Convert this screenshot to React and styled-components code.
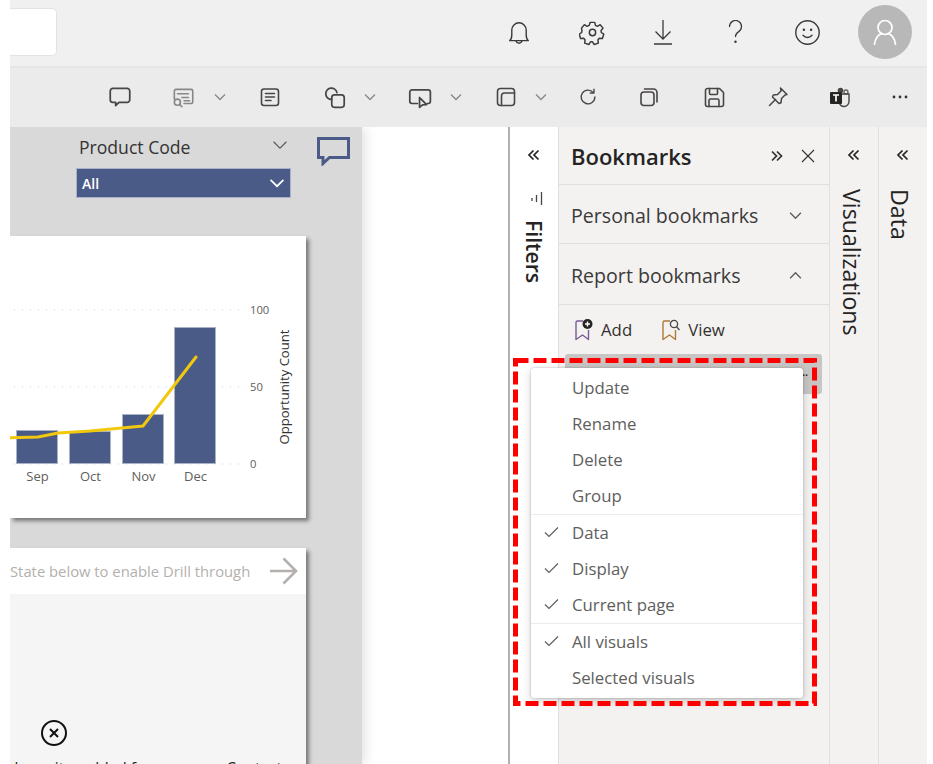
import React from "react";
import styled, { createGlobalStyle } from "styled-components";

const Global = createGlobalStyle`
  html, body { margin: 0; padding: 0; background: #fff; overflow: hidden; }
  * { box-sizing: border-box; }
  body { font-family: "Open Sans", "Noto Sans", sans-serif; }
`;

const Shell = styled.div`
  margin-left: 10px;
  width: 917px;
  height: 764px;
  overflow: hidden;
  display: flex;
  flex-direction: column;
`;

const TopBar = styled.header`
  height: 68px;
  flex: none;
  background: #f0f0f0;
  border-bottom: 2px solid #e6e6e6;
  display: flex;
  align-items: flex-start;
  justify-content: space-between;
  padding-right: 15px;
`;

const SearchBox = styled.div`
  width: 47px;
  height: 48px;
  margin-top: 8px;
  background: #fff;
  border: 1px solid #e2e2e2;
  border-left: 0;
  border-radius: 0 5px 5px 0;
`;

const TopActions = styled.div`
  display: flex;
  align-items: center;
  height: 64px;
`;

const TopIcon = styled.span`
  width: 32px;
  height: 32px;
  margin-left: ${(p) => p.$gap ?? 40}px;
  display: flex;
  align-items: center;
  justify-content: center;
  color: #3b3a39;
  svg { display: block; }
`;

const GearNudge = styled.span`
  display: block;
  margin-left: 2px;
`;

const Avatar = styled.div`
  width: 54px;
  height: 54px;
  margin-left: 35px;
  border-radius: 50%;
  background: #b8b8b8;
  display: flex;
  align-items: center;
  justify-content: center;
`;

const Toolbar = styled.div`
  height: 59px;
  flex: none;
  background: #ebebeb;
  display: flex;
  align-items: center;
  padding-left: 96px;
  padding-bottom: 1px;
`;

const ToolIcon = styled.span`
  width: 28px;
  height: 28px;
  flex: none;
  margin-left: ${(p) => p.$gap ?? 0}px;
  display: flex;
  align-items: center;
  justify-content: center;
  color: ${(p) => (p.$muted ? "#8a8886" : "#484644")};
  svg { display: block; }
`;

const Main = styled.main`
  flex: 1;
  min-height: 0;
  display: flex;
  position: relative;
`;

const Canvas = styled.section`
  width: 352px;
  flex: none;
  background: #d9d9d9;
  position: relative;
  z-index: 1;
  box-shadow: 2px 0 12px rgba(0, 0, 0, 0.14);
  clip-path: inset(0 -24px 0 0);
  display: flex;
  flex-direction: column;
  overflow: hidden;
`;

const CanvasHead = styled.div`
  height: 109px;
  flex: none;
  display: flex;
  padding: 10px 0 0 66px;
`;

const Slicer = styled.div`
  width: 215px;
`;

const SlicerTitle = styled.div`
  display: flex;
  align-items: center;
  justify-content: space-between;
  height: 21px;
  padding: 0 2px 0 3px;
  font-size: 17.6px;
  color: #333;
  line-height: 21px;
  svg { margin-top: -6px; }
`;

const SlicerSelect = styled.div`
  margin-top: 10px;
  height: 30px;
  background: #4a5b87;
  border: 1px solid #a9b2cc;
  color: #fff;
  font-size: 14px;
  font-weight: 600;
  display: flex;
  align-items: center;
  justify-content: space-between;
  padding: 0 4px 0 5px;
`;

const CommentMark = styled.div`
  margin-left: 26px;
  width: 33px;
  height: 30px;
  svg { display: block; }
`;

const Cards = styled.div`
  display: flex;
  flex-direction: column;
  gap: 30px;
  width: 296px;
`;

const Card = styled.article`
  background: #fff;
  box-shadow: 3px 3px 4px rgba(0, 0, 0, 0.45);
  height: ${(p) => p.$h}px;
  flex: none;
  svg { display: block; }
`;

const DrillHeader = styled.div`
  height: 46px;
  display: flex;
  align-items: center;
  justify-content: space-between;
  padding-right: 8px;
  font-size: 14.8px;
  color: #b3b0ad;
  white-space: nowrap;
`;

const DrillBody = styled.div`
  height: 178px;
  background: #f5f5f5;
  padding: 126px 0 0 31px;
  overflow: hidden;
`;

const DrillNote = styled.div`
  margin: 12px 0 0 -31px;
  width: 272px;
  text-align: right;
  font-size: 15.5px;
  line-height: 20px;
  color: #252423;
  white-space: nowrap;
`;

const BlankArea = styled.div`
  flex: 1;
  background: #fff;
`;

const SidePane = styled.aside`
  width: ${(p) => p.$w}px;
  flex: none;
  background: ${(p) => p.$bg || "#f3f2f1"};
  border-left: ${(p) => p.$edge || "1.5px solid #e1dfdd"};
  display: flex;
  flex-direction: column;
  align-items: center;
  padding-top: 21px;
  color: #252423;
  svg { display: block; }
`;

const VerticalLabel = styled.div`
  writing-mode: vertical-rl;
  font-size: ${(p) => p.$size || 23.2}px;
  font-weight: ${(p) => p.$weight || 500};
  line-height: 26px;
  margin-top: ${(p) => p.$top}px;
  margin-left: ${(p) => p.$left || 0}px;
  color: #252423;
`;

const FunnelMark = styled.div`
  margin: 30px 0 0 6px;
  height: 14px;
`;

const BookmarksPane = styled.section`
  width: 271px;
  flex: none;
  background: #f3f2f1;
  border-left: 1.5px solid #e1dfdd;
  display: flex;
  flex-direction: column;
  color: #323130;
  svg { display: block; }
`;

const PaneHead = styled.div`
  height: 58px;
  flex: none;
  border-bottom: 1.5px solid #e1dfdd;
  display: flex;
  align-items: center;
  padding: 0 14px 0 12px;
`;

const PaneTitle = styled.h2`
  margin: 0;
  flex: 1;
  font-size: 22px;
  font-weight: 600;
  color: #252423;
`;

const PaneAction = styled.span`
  margin-left: ${(p) => p.$gap || 0}px;
  color: #323130;
`;

const Section = styled.div`
  height: ${(p) => p.$h}px;
  flex: none;
  border-bottom: 1.5px solid #e1dfdd;
  display: flex;
  align-items: center;
  justify-content: space-between;
  padding: 2px 26px 0 12px;
  font-size: 19.6px;
  color: #3b3a39;
`;

const ActionRow = styled.div`
  height: 49px;
  flex: none;
  display: flex;
  align-items: center;
  padding-left: 15px;
  font-size: 16.8px;
  color: #323130;
`;

const ActionButton = styled.span`
  display: flex;
  align-items: center;
  gap: 7px;
  margin-left: ${(p) => p.$gap || 0}px;
`;

const BookmarkRow = styled.div`
  margin: 0 7px 0 6px;
  height: 40px;
  background: #c8c6c4;
  border-radius: 3px;
  display: flex;
  justify-content: flex-end;
  padding: 17px 14px 0 0;
  font-size: 8px;
  line-height: 1;
  color: #323130;
`;

const Menu = styled.div`
  position: absolute;
  left: 521px;
  top: 241px;
  width: 272px;
  height: 330px;
  padding: 2px 0;
  background: #fff;
  border-radius: 3px;
  box-shadow: 0 0 2px rgba(0, 0, 0, 0.3), 0 3px 10px rgba(0, 0, 0, 0.18);
  z-index: 3;
`;

const MenuGroup = styled.div`
  & + & { border-top: 1.5px solid #edebe9; }
`;

const MenuItem = styled.div`
  height: 36px;
  padding-bottom: 2px;
  display: flex;
  align-items: center;
  font-size: 16.8px;
  color: #605e5c;
`;

const CheckSlot = styled.span`
  width: 41px;
  flex: none;
  display: flex;
  justify-content: center;
  color: #605e5c;
`;

const Callout = styled.svg`
  position: absolute;
  left: 503px;
  top: 231px;
  z-index: 4;
  pointer-events: none;
`;

const I = ({ children, s = 24, sw = 1.6, vb = 24 }) => (
  <svg width={s} height={s} viewBox={`0 0 ${vb} ${vb}`} fill="none" stroke="currentColor" strokeWidth={sw} strokeLinecap="round" strokeLinejoin="round">
    {children}
  </svg>
);

const Chevron = ({ up, s = 14, color = "#8a8886", sw = 1.3 }) => (
  <svg width={s} height={s} viewBox="0 0 14 14" fill="none" stroke={color} strokeWidth={sw}>
    <polyline points={up ? "2,9.5 7,4.5 12,9.5" : "2,4.5 7,9.5 12,4.5"} />
  </svg>
);

const Double = ({ right }) => (
  <svg width="14" height="14" viewBox="0 0 14 14" fill="none" stroke="currentColor" strokeWidth="1.7">
    {right ? (
      <>
        <polyline points="2,2.5 6.5,7 2,11.5" />
        <polyline points="7,2.5 11.5,7 7,11.5" />
      </>
    ) : (
      <>
        <polyline points="6.5,2.5 2,7 6.5,11.5" />
        <polyline points="11.5,2.5 7,7 11.5,11.5" />
      </>
    )}
  </svg>
);

const Check = () => (
  <svg width="15" height="12" viewBox="0 0 15 12" fill="none" stroke="currentColor" strokeWidth="1.2">
    <polyline points="1,6.5 5,10.5 14,1.5" />
  </svg>
);

const BookmarkIcon = ({ color, kind }) => (
  <svg width="20" height="24" viewBox="0 0 20 24" fill="none">
    <path d="M2 4.5 a1.5 1.5 0 0 1 1.5-1.5 H9 M14.5 12 V21.5 L8.5 17 L2 21.5 V4.5" stroke={color} strokeWidth="1.4" strokeLinejoin="round" />
    {kind === "add" ? (
      <>
        <circle cx="13.5" cy="6" r="5" fill="#252423" />
        <path d="M13.5 3.5v5M11 6h5" stroke="#fff" strokeWidth="1.4" />
      </>
    ) : (
      <>
        <circle cx="13" cy="6" r="3.6" stroke="#484644" strokeWidth="1.3" />
        <path d="M15.6 8.8 L18.5 12" stroke="#484644" strokeWidth="1.3" />
      </>
    )}
  </svg>
);

const months = [
  { m: "Sep", x: 16, top: 430 },
  { m: "Oct", x: 69, top: 431 },
  { m: "Nov", x: 122, top: 414 },
  { m: "Dec", x: 174, top: 327 },
];

const BarChart = () => (
  <svg width="296" height="282" viewBox="10 236 296 282">
    {[310, 387, 464].map((y) => (
      <line key={y} x1="14" x2="240" y1={y} y2={y} stroke="#cfcfcf" strokeWidth="1" strokeDasharray="1 7" />
    ))}
    {months.map((b) => (
      <g key={b.m}>
        <rect x={b.x + 0.5} y={b.top + 0.5} width="41" height={463 - b.top} fill="#4a5b87" stroke="#aab2c8" strokeWidth="1" />
        <text x={b.x + 21.5} y="480.5" textAnchor="middle" fontSize="13" fill="#605e5c" fontFamily="Open Sans, sans-serif">{b.m}</text>
      </g>
    ))}
    <polyline points="0,438 38,437 58,433 90,431 143,426 196,357" fill="none" stroke="#f2c80f" strokeWidth="3" strokeLinecap="round" strokeLinejoin="round" />
    {[["100", 313.5], ["50", 390.5], ["0", 467.5]].map(([t, y]) => (
      <text key={t} x="250" y={y} fontSize="11.2" fill="#605e5c" fontFamily="Open Sans, sans-serif">{t}</text>
    ))}
    <text transform="translate(288.5 387) rotate(-90)" textAnchor="middle" fontSize="13.1" fill="#333" fontFamily="Open Sans, sans-serif">Opportunity Count</text>
  </svg>
);

const tools = [
  { gap: 0, el: <I s={26}><path d="M5.5 4h13A2.5 2.5 0 0 1 21 6.5v8a2.5 2.5 0 0 1-2.5 2.5H11l-3 3v-3H5.5A2.5 2.5 0 0 1 3 14.5v-8A2.5 2.5 0 0 1 5.5 4Z" /></I> },
  { gap: 35, muted: true, el: <I s={26} sw={1.5}><path d="M4 14V6.5A1.5 1.5 0 0 1 5.5 5h14A1.5 1.5 0 0 1 21 6.5v10a1.5 1.5 0 0 1-1.5 1.5H13M7 9h10M11 12.5h6M13 15.5h5" /><circle cx="6.8" cy="16.8" r="2.8" /><path d="M9 19l2 2" /></I> },
  { gap: 9, el: <Chevron /> },
  { gap: 22, el: <I s={24}><rect x="3.5" y="4" width="17" height="16.5" rx="2.5" /><path d="M7.5 8.5h9M7.5 12h9M7.5 15.5h5.5" /></I> },
  { gap: 37, el: <I s={26}><path d="M9 14.2A5.2 5.2 0 1 1 13.8 8" /><rect x="9" y="10" width="11.5" height="11.5" rx="2.5" /></I> },
  { gap: 7, el: <Chevron /> },
  { gap: 21, el: <I s={26}><path d="M10.5 18H5.5A2 2 0 0 1 3.5 16V7.5a2 2 0 0 1 2-2h15a2 2 0 0 1 2 2V16a2 2 0 0 1-2 2h-1" /><path d="M12.5 12.5v9l2.8-2.2 3.7-.3Z" /></I> },
  { gap: 9, el: <Chevron /> },
  { gap: 22, el: <I s={24}><rect x="3.5" y="3.5" width="17" height="17" rx="3" /><path d="M7.5 20.5V11a3 3 0 0 1 3-3h10" /></I> },
  { gap: 7, el: <Chevron /> },
  { gap: 19, el: <I s={22} sw={1.5}><path d="M17.8 7.2A7.5 7.5 0 1 0 19.5 12" /><path d="M18.5 3.5v4.2h-4" /></I> },
  { gap: 33, el: <I s={24}><rect x="4" y="7" width="13" height="13.5" rx="3" /><path d="M7.5 4h9A3.5 3.5 0 0 1 20 7.5V17" /></I> },
  { gap: 37, el: <I s={24}><path d="M5.5 3.5h12l4 4v12a2 2 0 0 1-2 2h-14a2 2 0 0 1-2-2v-14a2 2 0 0 1 2-2Z" /><path d="M7.5 3.5v5a1 1 0 0 0 1 1h6a1 1 0 0 0 1-1v-5M7 21.5v-6a1.5 1.5 0 0 1 1.5-1.5h7a1.5 1.5 0 0 1 1.5 1.5v6" /></I> },
  { gap: 36, el: <I s={24} sw={1.5}><path d="M14.5 3 21 9.5l-2 .5-3.5 3.5-.5 4.2-2 .8-6.5-6.5.8-2 4.2-.5L15 6Z" /><path d="M9.5 14.5 3.5 20.5" /></I> },
  {
    gap: 33,
    el: (
      <svg width="22" height="22" viewBox="0 0 22 22">
        <circle cx="12.5" cy="4.5" r="2.8" fill="#484644" />
        <circle cx="18" cy="6" r="2" fill="none" stroke="#605e5c" strokeWidth="1.3" />
        <path d="M9 8h12v7a5 5 0 0 1-10 1H9Z" fill="none" stroke="#484644" strokeWidth="1.4" />
        <rect x="2" y="6" width="12" height="12" rx="1" fill="#252423" />
        <path d="M5 9h6M8 9v6.5" stroke="#fff" strokeWidth="1.7" />
      </svg>
    ),
  },
  { gap: 33, el: <svg width="18" height="6" viewBox="0 0 18 6" fill="#323130"><circle cx="3" cy="3" r="1.4" /><circle cx="9" cy="3" r="1.4" /><circle cx="15" cy="3" r="1.4" /></svg> },
];

const menuGroups = [
  [["Update"], ["Rename"], ["Delete"], ["Group"]],
  [["Data", true], ["Display", true], ["Current page", true]],
  [["All visuals", true], ["Selected visuals"]],
];

export default function App() {
  return (
    <>
      <Global />
      <Shell>
        <TopBar>
          <SearchBox />
          <TopActions>
            <TopIcon $gap={0}>
              <I s={34} sw={1.05}><path d="M5 18.5c1.2-1 1.6-2.4 1.6-4.5v-3.5a5.4 5.4 0 0 1 10.8 0V14c0 2.1.4 3.5 1.6 4.5Z" /><path d="M9.8 18.8a2.3 2.3 0 0 0 4.4 0" /></I>
            </TopIcon>
            <TopIcon>
              <GearNudge>
                <I s={27} sw={1.3}><path d="M10 3h4l.6 2.7 1.8.8 2.4-1.4 2.6 3-1.8 2.1.2 1.8 2.2 1.5-1.2 3.8-2.8-.1-1.2 1.4.4 2.8-3.7 1.3-1.5-2.4h-1.8l-1.5 2.4-3.7-1.3.4-2.8-1.2-1.4-2.8.1-1.2-3.8 2.2-1.5.2-1.8L2.2 8.1l2.6-3 2.4 1.4 1.8-.8Z" /><circle cx="12" cy="12" r="2.8" /></I>
              </GearNudge>
            </TopIcon>
            <TopIcon>
              <svg width="20" height="26" viewBox="0 0 20 26" fill="none" stroke="#3b3a39" strokeWidth="1.3"><path d="M10 1v19M2.5 12.5 10 20l7.5-7.5M1 25h18" /></svg>
            </TopIcon>
            <TopIcon>
              <svg width="15" height="24" viewBox="0 0 15 24" fill="none" stroke="#3b3a39" strokeWidth="1.25" strokeLinecap="round"><path d="M1.5 6.5a6 6 0 1 1 9.2 5.1C8.8 12.8 7.5 13.8 7.5 16.5" /><circle cx="7.5" cy="21.8" r="0.6" fill="#3b3a39" /></svg>
            </TopIcon>
            <TopIcon>
              <I s={27} sw={1.25}><circle cx="12" cy="12" r="10.4" /><path d="M8 14.5a5.2 5.2 0 0 0 8 0" /><circle cx="8.8" cy="9.5" r="0.5" fill="currentColor" /><circle cx="15.2" cy="9.5" r="0.5" fill="currentColor" /></I>
            </TopIcon>
            <Avatar>
              <svg width="26" height="26" viewBox="0 0 26 26" fill="none" stroke="#fff" strokeWidth="1.7" strokeLinecap="round"><circle cx="13" cy="8.5" r="7" /><path d="M2.5 25.5c.5-6 4-9.8 6.5-10.6M23.5 25.5c-.5-6-4-9.8-6.5-10.6" /></svg>
            </Avatar>
          </TopActions>
        </TopBar>

        <Toolbar>
          {tools.map((t, i) => (
            <ToolIcon key={i} $gap={t.gap} $muted={t.muted}>{t.el}</ToolIcon>
          ))}
        </Toolbar>

        <Main>
          <Canvas>
            <CanvasHead>
              <Slicer>
                <SlicerTitle>
                  Product Code
                  <Chevron s={18} color="#605e5c" sw={1} />
                </SlicerTitle>
                <SlicerSelect>
                  All
                  <Chevron s={18} color="#fff" sw={1.3} />
                </SlicerSelect>
              </Slicer>
              <CommentMark>
                <svg width="33" height="29" viewBox="0 0 33 29" fill="none"><path d="M1.5 1.5h30v19H12.5l-6.5 6v-6H1.5Z" stroke="#4a5b87" strokeWidth="3" /></svg>
              </CommentMark>
            </CanvasHead>
            <Cards>
              <Card $h={282}>
                <BarChart />
              </Card>
              <Card $h={224}>
                <DrillHeader>
                  State below to enable Drill through
                  <svg width="28" height="28" viewBox="0 0 28 28" fill="none" stroke="#b3b0ad" strokeWidth="2.6"><path d="M0 14h26M13.5 1.5 26 14 13.5 26.5" /></svg>
                </DrillHeader>
                <DrillBody>
                  <svg width="26" height="26" viewBox="0 0 26 26" fill="none" stroke="#111" strokeWidth="2"><circle cx="13" cy="13" r="12" /><path d="M9 9l8 8M17 9l-8 8" /></svg>
                  <DrillNote>been it enabled for your use. Contact</DrillNote>
                </DrillBody>
              </Card>
            </Cards>
          </Canvas>

          <BlankArea />

          <SidePane $w={50} $bg="#fff" $edge="2px solid #b3b0ad">
            <Double />
            <FunnelMark>
              <svg width="12" height="14" viewBox="0 0 12 14" stroke="#484644" strokeWidth="1.3"><path d="M1 6v3M5.5 3v7M10.5 0v13" /></svg>
            </FunnelMark>
            <VerticalLabel $top={14} $size={21.2} $weight={600} $left={-1}>Filters</VerticalLabel>
          </SidePane>

          <BookmarksPane>
            <PaneHead>
              <PaneTitle>Bookmarks</PaneTitle>
              <PaneAction><Double right /></PaneAction>
              <PaneAction $gap={17}>
                <svg width="14" height="14" viewBox="0 0 14 14" stroke="currentColor" strokeWidth="1.1"><path d="M1 1l12 12M13 1 1 13" /></svg>
              </PaneAction>
            </PaneHead>
            <Section $h={59}>
              Personal bookmarks
              <Chevron s={15} color="#605e5c" />
            </Section>
            <Section $h={61}>
              Report bookmarks
              <Chevron up s={15} color="#605e5c" />
            </Section>
            <ActionRow>
              <ActionButton>
                <BookmarkIcon color="#7a5c93" kind="add" />
                Add
              </ActionButton>
              <ActionButton $gap={29}>
                <BookmarkIcon color="#b07a35" kind="view" />
                View
              </ActionButton>
            </ActionRow>
            <BookmarkRow>•••</BookmarkRow>
          </BookmarksPane>

          <SidePane $w={49}>
            <Double />
            <VerticalLabel $top={27} $left={-4}>Visualizations</VerticalLabel>
          </SidePane>
          <SidePane $w={49}>
            <Double />
            <VerticalLabel $top={27} $left={-6}>Data</VerticalLabel>
          </SidePane>

          <Menu>
            {menuGroups.map((g, i) => (
              <MenuGroup key={i}>
                {g.map(([label, checked]) => (
                  <MenuItem key={label}>
                    <CheckSlot>{checked && <Check />}</CheckSlot>
                    {label}
                  </MenuItem>
                ))}
              </MenuGroup>
            ))}
          </Menu>

          <Callout width="304" height="348" viewBox="0 0 304 348" fill="none">
            <rect x="2.5" y="2.5" width="299" height="343" stroke="#ff0000" strokeWidth="5" strokeDasharray="13 5" />
          </Callout>
        </Main>
      </Shell>
    </>
  );
}
